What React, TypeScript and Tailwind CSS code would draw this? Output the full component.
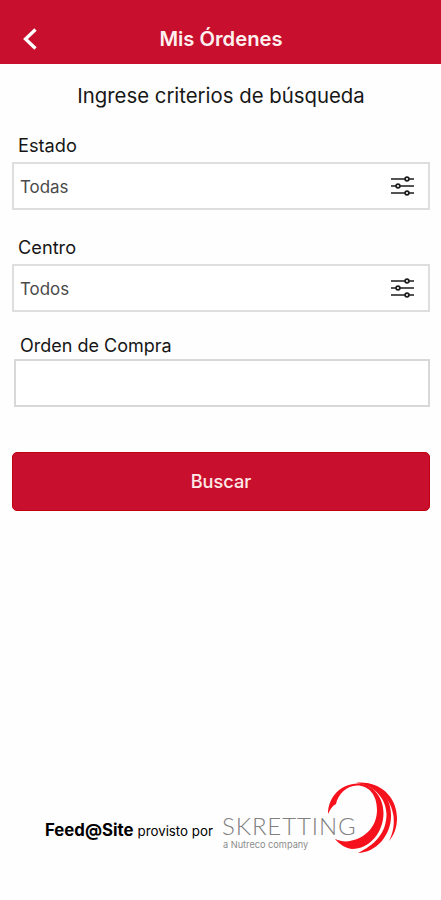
function SlidersIcon() {
  return (
    <svg width="24" height="22" viewBox="0 0 24 22" fill="none" stroke="#1c1c1c" strokeWidth="1.700" aria-hidden>
      <path d="M0 4h14M18 4h5M0 11h5M9 11h14M0 18h14M18 18h5" />
      <circle cx="16" cy="4" r="1.900" />
      <circle cx="7" cy="11" r="1.900" />
      <circle cx="16" cy="18" r="1.900" />
    </svg>
  );
}

function SelectField({ label, value }: { label: string; value: string }) {
  return (
    <div className="mb-[26px]">
      <p className="h-[28px] pl-[6px] text-[18.200px] leading-[22px] text-[#161616]">{label}</p>
      <button
        type="button"
        className="flex h-12 w-full items-center justify-between border-2 border-[#dedede] bg-white pr-[13px] pl-[6px] text-left text-[16.900px] text-[#4a4a4a]"
      >
        <span className="pt-[3px]">{value}</span>
        <SlidersIcon />
      </button>
    </div>
  );
}

function Swirl() {
  return (
    <svg width="74" height="74" viewBox="326 781 74 74" fill="#f5121d" aria-hidden>
      <path d="M328 814C328 797 341 783 359 783.500C374 785 383.500 798 383.500 813C383.500 833 369 849 352 849C345 848 339 844 335 839C340 841 345 842 350 841C366 838 377 826 377 810C377 795 369 785.500 357 785.500C347 785.500 338 794 336 804C332 806 330 810 328 814Z" />
      <path d="M356 783C374 780 390.500 794 391 814C392 835 376 853 358 853C374 845 386.500 834 386.500 814C386 798 374 785 356 783Z" />
      <path d="M364 783C384 784 397 800 397 818C397 828 394 835 389 841C393 833 394.500 825 393.500 816C391.500 801 381 788 364 783Z" />
    </svg>
  );
}

export default function App() {
  return (
    <main className="flex h-[900px] w-full flex-col bg-[#fefefe] font-['Inter','Liberation_Sans',sans-serif]">
      <header className="relative flex h-16 shrink-0 items-center justify-center bg-[#c8102e] pt-[14px]">
        <button type="button" aria-label="Volver" className="absolute top-[27px] left-[22px]">
          <svg width="16" height="24" viewBox="0 0 16 24" fill="none" stroke="white" strokeWidth="3.300" aria-hidden>
            <path d="M13.500 2.500 3.500 12l10 9.500" />
          </svg>
        </button>
        <h1 className="pl-px text-[20.200px] leading-6 font-semibold text-[#fff0f0]">Mis Órdenes</h1>
      </header>

      <h2 className="mt-[20px] pl-px text-center text-[20.350px] leading-6 text-[#161616]">
        Ingrese criterios de búsqueda
      </h2>

      <form className="mt-[26px] pr-[11px] pl-3" onSubmit={(e) => e.preventDefault()}>
        <SelectField label="Estado" value="Todas" />
        <SelectField label="Centro" value="Todos" />
        <label className="-mt-[3px] block pl-[2px]">
          <span className="block h-[24px] pl-[6px] text-[18px] leading-[22px] text-[#161616]">Orden de Compra</span>
          <input className="block h-12 w-full border-2 border-[#d8d8d8] bg-white px-2 outline-none" />
        </label>
        <button
          type="submit"
          className="mt-[45px] h-[59px] w-full rounded-[5px] border border-[#c00010] bg-[#c8102e] pt-px text-[18.200px] font-medium text-[#ffe9e9]"
        >
          Buscar
        </button>
      </form>

      <footer className="mt-auto mb-[45px] flex h-[74px] items-start pl-[45px]">
        <p className="mt-[37px] flex w-[177px] items-baseline whitespace-nowrap text-black">
          <span className="text-[16.800px] leading-6 font-bold">Feed@Site</span>
          <span className="ml-[4px] text-[13.300px]">provisto por</span>
        </p>
        <div className="relative h-[74px] w-[178px]">
          <div className="absolute top-0 left-[104px]">
            <Swirl />
          </div>
          <p className="absolute top-[35px] left-0 font-['Lato',sans-serif] text-[24px] leading-[20px] font-light tracking-[0.900px] whitespace-nowrap text-[#808080]">
            SKRETTING
          </p>
          <p className="absolute top-[58px] left-[1px] text-[9.200px] leading-[11px] whitespace-nowrap text-[#8c8c8c]">
            a Nutreco company
          </p>
        </div>
      </footer>
    </main>
  );
}
